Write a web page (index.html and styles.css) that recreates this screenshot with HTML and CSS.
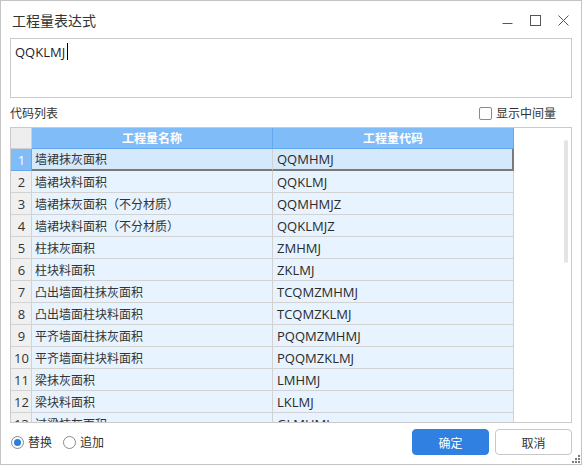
FILE: index.html
```html
<!DOCTYPE html>
<html lang="zh-CN">
<head>
<meta charset="utf-8">
<title>工程量表达式</title>
<link rel="stylesheet" href="styles.css">
</head>
<body>
<div class="window">
  <div class="titlebar">
    <span class="title">工程量表达式</span>
    <div class="controls">
      <svg class="ctl" width="11" height="11" viewBox="0 0 11 11"><path d="M0.5 8.5H10.5" stroke="#555" stroke-width="1"/></svg>
      <svg class="ctl" width="11" height="11" viewBox="0 0 11 11"><rect x="0.5" y="0.5" width="10" height="10" fill="none" stroke="#555" stroke-width="1"/></svg>
      <svg class="ctl" width="11" height="11" viewBox="0 0 11 11"><path d="M0.5 0.5L10.5 10.5M10.5 0.5L0.5 10.5" stroke="#555" stroke-width="1"/></svg>
    </div>
  </div>
  <div class="content">
    <div class="expr"><span class="expr-text">QQKLMJ</span><span class="caret"></span></div>
    <div class="listbar">
      <span class="label">代码列表</span>
      <label class="check"><span class="box"></span><span>显示中间量</span></label>
    </div>
    <div class="frame">
      <div class="grid">
        <div class="row head">
          <div class="cell num corner"></div>
          <div class="cell hname">工程量名称</div>
          <div class="cell hcode">工程量代码</div>
        </div>
        <div class="row sel">
          <div class="cell num numsel">1</div>
          <div class="cell name">墙裙抹灰面积</div>
          <div class="cell code">QQMHMJ</div>
        </div>
        <div class="row"><div class="cell num">2</div><div class="cell name">墙裙块料面积</div><div class="cell code">QQKLMJ</div></div>
        <div class="row"><div class="cell num">3</div><div class="cell name">墙裙抹灰面积（不分材质）</div><div class="cell code">QQMHMJZ</div></div>
        <div class="row"><div class="cell num">4</div><div class="cell name">墙裙块料面积（不分材质）</div><div class="cell code">QQKLMJZ</div></div>
        <div class="row"><div class="cell num">5</div><div class="cell name">柱抹灰面积</div><div class="cell code">ZMHMJ</div></div>
        <div class="row"><div class="cell num">6</div><div class="cell name">柱块料面积</div><div class="cell code">ZKLMJ</div></div>
        <div class="row"><div class="cell num">7</div><div class="cell name">凸出墙面柱抹灰面积</div><div class="cell code">TCQMZMHMJ</div></div>
        <div class="row"><div class="cell num">8</div><div class="cell name">凸出墙面柱块料面积</div><div class="cell code">TCQMZKLMJ</div></div>
        <div class="row"><div class="cell num">9</div><div class="cell name">平齐墙面柱抹灰面积</div><div class="cell code">PQQMZMHMJ</div></div>
        <div class="row"><div class="cell num">10</div><div class="cell name">平齐墙面柱块料面积</div><div class="cell code">PQQMZKLMJ</div></div>
        <div class="row"><div class="cell num">11</div><div class="cell name">梁抹灰面积</div><div class="cell code">LMHMJ</div></div>
        <div class="row"><div class="cell num">12</div><div class="cell name">梁块料面积</div><div class="cell code">LKLMJ</div></div>
        <div class="row"><div class="cell num">13</div><div class="cell name">过梁抹灰面积</div><div class="cell code">GLMHMJ</div></div>
      </div>
      <div class="track"><div class="thumb"></div></div>
    </div>
    <div class="footer">
      <label class="radio"><span class="circle on"></span><span>替换</span></label>
      <label class="radio r2"><span class="circle"></span><span>追加</span></label>
      <button class="btn primary">确定</button>
      <button class="btn">取消</button>
    </div>
  </div>
  <svg class="grip" width="8" height="8" viewBox="0 0 8 8">
    <rect x="6" y="0" width="2" height="2" fill="#7a7a7a"/>
    <rect x="3" y="3" width="2" height="2" fill="#7a7a7a"/>
    <rect x="6" y="3" width="2" height="2" fill="#7a7a7a"/>
    <rect x="0" y="6" width="2" height="2" fill="#7a7a7a"/>
    <rect x="3" y="6" width="2" height="2" fill="#7a7a7a"/>
    <rect x="6" y="6" width="2" height="2" fill="#7a7a7a"/>
  </svg>
</div>
</body>
</html>
```
FILE: styles.css
```css
* { box-sizing: border-box; }
html, body { margin: 0; padding: 0; background: #fff; }
body {
  font-family: "Open Sans", "Noto Sans CJK SC", sans-serif;
  font-size: 12px;
  color: #333;
}
.window {
  position: relative;
  width: 582px;
  height: 465px;
  border: 1px solid #c4c4c4;
  background: #fff;
  display: flex;
  flex-direction: column;
  overflow: hidden;
}
.titlebar {
  height: 37px;
  display: flex;
  align-items: center;
  padding-left: 11px;
  padding-right: 12px;
}
.title {
  font-family: "Noto Sans CJK SC", sans-serif;
  font-size: 14px;
  line-height: 18px;
  color: #333;
}
.controls {
  margin-left: auto;
  display: flex;
  align-items: center;
  gap: 17px;
  padding-top: 1px;
}
.ctl { display: block; }
.content {
  flex: 1;
  display: flex;
  flex-direction: column;
  padding: 0 9px;
}
.expr {
  height: 60px;
  border: 1px solid #cacaca;
  padding: 4px 4px;
  font-size: 13px;
  line-height: 18px;
  color: #1c1c2c;
  display: flex;
  align-items: flex-start;
}
.caret {
  display: inline-block;
  width: 1px;
  height: 17px;
  background: #000;
  margin-left: 2px;
  margin-top: 0px;
}
.listbar {
  height: 29px;
  display: flex;
  align-items: center;
  justify-content: space-between;
  padding-right: 16px;
  padding-top: 1px;
}
.label {
  font-family: "Noto Sans CJK SC", sans-serif;
  line-height: 16px;
}
.check {
  display: flex;
  align-items: center;
  font-family: "Noto Sans CJK SC", sans-serif;
  line-height: 16px;
}
.box {
  width: 13px;
  height: 13px;
  border: 1px solid #8a8a8a;
  border-radius: 2px;
  margin-right: 4px;
  background: #fff;
}
.frame {
  height: 296px;
  border: 1px solid #cacaca;
  display: flex;
  overflow: hidden;
}
.grid {
  width: 503px;
  flex: none;
  overflow: hidden;
}
.row {
  display: grid;
  grid-template-columns: 21px 241px 241px;
  height: 22px;
  background: #e7f3fe;
}
.cell {
  border-right: 1px solid #d2d2d2;
  border-bottom: 1px solid #d2d2d2;
  display: flex;
  align-items: center;
  white-space: nowrap;
  overflow: hidden;
  line-height: 16px;
}
.num {
  background: #f0f0f0;
  justify-content: center;
  font-size: 13px;
  color: #333;
  padding-left: 1px;
}
.name {
  font-family: "Noto Sans CJK SC", sans-serif;
  font-size: 12px;
  padding-left: 3px;
}
.code {
  font-size: 13px;
  padding-left: 4px;
  color: #2a2a2a;
}
.row.head {
  height: 21px;
  background: #80bcf7;
}
.corner {
  background: #eeeeee;
  border-right-color: #d0d0d0;
  border-bottom-color: #d0d0d0;
}
.hname, .hcode {
  justify-content: center;
  color: #fff;
  font-family: "Noto Sans CJK SC", sans-serif;
  font-weight: bold;
  font-size: 12px;
  border-right-color: #65a8ef;
  border-bottom-color: #65a8ef;
}
.row.sel { background: #d5e9fd; }
.numsel {
  background: #80bcf7;
  color: #fff;
  border-right-color: #65a8ef;
  border-bottom-color: #65a8ef;
}
.row.sel .name, .row.sel .code {
  border-bottom: 2px solid #7a7a7a;
}
.row.sel .code {
  border-right: 2px solid #7a7a7a;
}
.track {
  flex: 1;
  display: flex;
  justify-content: flex-end;
  padding-top: 12px;
  padding-right: 3px;
}
.thumb {
  width: 4px;
  height: 123px;
  border-radius: 2px;
  background: #e4e4e4;
}
.footer {
  display: flex;
  align-items: center;
  margin-top: 6px;
  height: 26px;
}
.radio {
  display: flex;
  align-items: center;
  font-family: "Noto Sans CJK SC", sans-serif;
  font-size: 12px;
  line-height: 16px;
  margin-left: 1px;
  gap: 4px;
}
.radio.r2 { margin-left: 11px; }
.circle {
  width: 13px;
  height: 13px;
  border: 1px solid #8a8a8a;
  border-radius: 50%;
  background: #fff;
  display: flex;
  align-items: center;
  justify-content: center;
}
.circle.on::after {
  content: "";
  width: 7px;
  height: 7px;
  border-radius: 50%;
  background: #2a7ee0;
}
.btn {
  width: 77px;
  height: 26px;
  border: 1px solid #c8c8c8;
  border-radius: 4px;
  background: #fff;
  font-family: "Noto Sans CJK SC", sans-serif;
  font-size: 12px;
  color: #333;
  padding: 0;
  margin-left: 6px;
}
.btn.primary {
  margin-left: auto;
  background: #2f80e0;
  border-color: #2f80e0;
  color: #fff;
}
.grip {
  position: absolute;
  right: 1px;
  bottom: 1px;
}
```
